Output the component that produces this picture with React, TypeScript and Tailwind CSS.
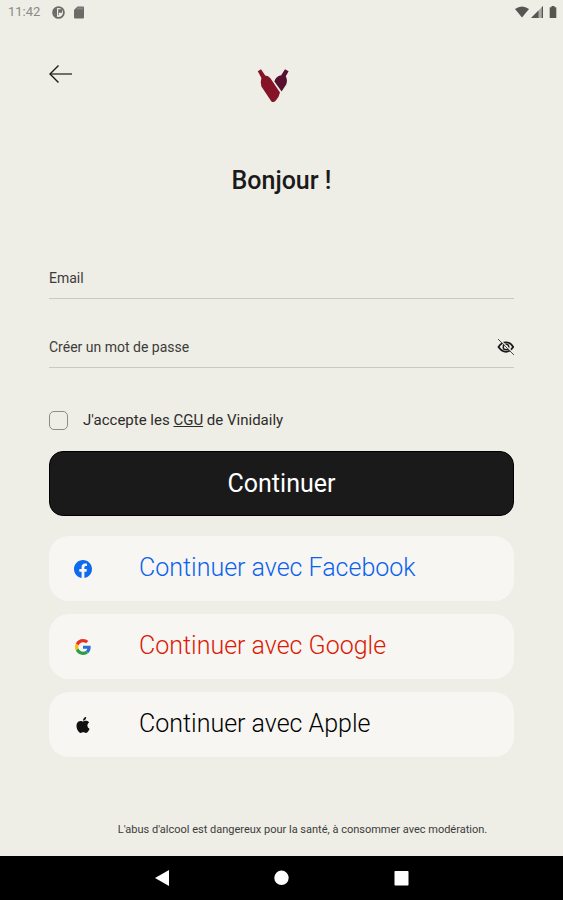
import { useState } from "react";
import type { ReactNode } from "react";

function StatusBar() {
  return (
    <div className="flex h-6 items-center justify-between pl-2 pr-1.5 text-[#6b6b67]">
      <div className="flex items-center">
        <span className="text-[13px] leading-6 text-[#8a8a86]">11:42</span>
        <svg className="ml-3 h-[13px] w-[13px]" viewBox="0 0 13 13">
          <circle cx="6.5" cy="6.5" r="5.4" fill="none" stroke="currentColor" strokeWidth="1.8" />
          <path d="M1.5 3.5L5 2v9L2.5 10z" fill="currentColor" />
          <path d="M6.2 3.2H10v3.6H6.9v2.4H6.2z" fill="currentColor" />
        </svg>
        <svg className="ml-2 h-[13px] w-3" viewBox="0 0 12 13" fill="currentColor">
          <path d="M4.5 0.5H10q1 0 1 1V11.5q0 1-1 1H2q-1 0-1-1V4z" />
          <path d="M5 1.5v2M7 1.5v2M9 1.5v2" stroke="#b8b8b3" strokeWidth="0.7" />
        </svg>
      </div>
      <div className="flex items-center text-[#555552]">
        <svg className="h-3 w-[14px]" viewBox="0 0 14 12" fill="currentColor">
          <path d="M0 3Q7-2 14 3L7 11.5z" />
        </svg>
        <svg className="ml-0.5 h-3 w-3" viewBox="0 0 12 12">
          <path d="M0 12L12 0v12z" fill="#a9a9a5" />
          <path d="M0 12L7.5 4.5V12zM10.8 1.2L12 0v12h-1.2z" fill="currentColor" />
        </svg>
        <svg className="ml-1.5 h-3 w-2" viewBox="0 0 8 12" fill="currentColor">
          <path d="M2.5 0h3v1.3h1.8V12H.7V1.3h1.8z" />
        </svg>
      </div>
    </div>
  );
}

function Logo() {
  return (
    <svg className="h-9 w-8" viewBox="0 0 32 36">
      <path
        d="M0.8 4.2L4 2.2L8.2 8.4Q11.5 8.6 13.4 11.2L23 25.4Q22 30.5 18.6 33.8Q16.5 36 14.4 34.4L4.4 19.4Q3 15 4.4 11z"
        fill="#851427"
      />
      <path
        d="M28 2.2L31.6 4.2L28.8 9.2Q31 13.5 29.2 17.4L24.6 24.4L17.4 14.4Q18.4 9.4 24.2 8.2z"
        fill="#561131"
      />
    </svg>
  );
}

function FacebookIcon() {
  return (
    <svg className="h-[18px] w-[18px]" viewBox="0 0 24 24">
      <path
        fill="#0f6bee"
        d="M24 12.07C24 5.4 18.63 0 12 0S0 5.4 0 12.07C0 18.1 4.39 23.1 10.13 24v-8.44H7.08v-3.49h3.05V9.41c0-3.02 1.79-4.69 4.53-4.69 1.31 0 2.68.24 2.68.24v2.97h-1.51c-1.49 0-1.96.93-1.96 1.89v2.25h3.33l-.53 3.49h-2.8V24C19.61 23.1 24 18.1 24 12.07z"
      />
    </svg>
  );
}

function GoogleIcon() {
  return (
    <svg className="h-4 w-4" viewBox="0 0 48 48">
      <path fill="#e8311f" d="M24 9.5c3.54 0 6.71 1.22 9.21 3.6l6.85-6.85C35.9 2.38 30.47 0 24 0 14.62 0 6.51 5.38 2.56 13.22l7.98 6.19C12.43 13.72 17.74 9.5 24 9.5z" />
      <path fill="#2a6fd6" d="M46.98 24.55c0-1.57-.15-3.09-.38-4.55H24v9.02h12.94c-.58 2.96-2.26 5.48-4.78 7.18l7.73 6c4.51-4.18 7.09-10.36 7.09-17.65z" />
      <path fill="#FBBC05" d="M10.53 28.59c-.48-1.45-.76-2.99-.76-4.59s.27-3.14.76-4.59l-7.98-6.19C.92 16.46 0 20.12 0 24c0 3.88.92 7.54 2.56 10.78l7.97-6.19z" />
      <path fill="#2a9d48" d="M24 48c6.48 0 11.93-2.13 15.89-5.81l-7.73-6c-2.15 1.45-4.92 2.3-8.16 2.3-6.26 0-11.57-4.22-13.47-9.91l-7.98 6.19C6.51 42.62 14.62 48 24 48z" />
    </svg>
  );
}

function AppleIcon() {
  return (
    <svg className="h-4 w-4" viewBox="0 0 24 24" fill="#111111">
      <path d="M12.15 6.9c-.95 0-2.42-1.08-3.96-1.04-2.04.03-3.91 1.18-4.96 3.01-2.12 3.68-.55 9.1 1.52 12.09 1.01 1.45 2.21 3.09 3.79 3.04 1.52-.07 2.09-.99 3.94-.99 1.83 0 2.35.99 3.96.95 1.64-.03 2.68-1.48 3.68-2.95 1.16-1.69 1.64-3.33 1.66-3.42-.04-.01-3.18-1.22-3.22-4.86-.03-3.04 2.48-4.49 2.6-4.56-1.43-2.09-3.62-2.32-4.39-2.38-2-.16-3.68 1.09-4.61 1.09zM15.53 3.83c.84-1.01 1.4-2.43 1.25-3.83-1.21.05-2.66.81-3.53 1.82-.78.9-1.45 2.34-1.27 3.71 1.34.1 2.72-.69 3.56-1.7" />
    </svg>
  );
}

interface SocialButtonProps {
  icon: ReactNode;
  label: string;
  color: string;
}

function SocialButton({ icon, label, color }: SocialButtonProps) {
  return (
    <button
      type="button"
      className="flex h-[65px] w-full items-center rounded-[20px] bg-[#f7f6f2] pl-6"
    >
      <span className="flex w-5 justify-center">{icon}</span>
      <span className={`ml-[46px] pb-0.5 text-[25px] font-light leading-8 ${color}`}>{label}</span>
    </button>
  );
}

function NavBar() {
  return (
    <nav className="flex h-11 items-center justify-center gap-[104px] bg-black text-white">
      <button type="button" aria-label="Retour">
        <svg className="h-4 w-4" viewBox="0 0 16 16" fill="currentColor">
          <path d="M1 8L15 0v16z" />
        </svg>
      </button>
      <button type="button" aria-label="Accueil">
        <svg className="h-4 w-4" viewBox="0 0 16 16" fill="currentColor">
          <circle cx="7.5" cy="7.8" r="7.2" />
        </svg>
      </button>
      <button type="button" aria-label="Applications">
        <svg className="h-4 w-4" viewBox="0 0 16 16" fill="currentColor">
          <rect x="0.5" y="1" width="14" height="14.5" rx="0.8" />
        </svg>
      </button>
    </nav>
  );
}

export default function App() {
  const [showPassword, setShowPassword] = useState(false);
  const [accepted, setAccepted] = useState(false);

  return (
    <div className="flex min-h-screen flex-col bg-[#eeede6] font-['Roboto',sans-serif] text-[#1a1a1a]">
      <StatusBar />

      <main className="flex flex-1 flex-col px-[49px]">
        <header className="mt-10 flex items-start">
          <button type="button" aria-label="Retour">
            <svg className="h-5 w-6" viewBox="0 0 24 20" fill="none" stroke="#1a1a1a">
              <path d="M1 10h22" strokeWidth="1.2" />
              <path d="M9.5 1.5L1 10l8.5 8.5" strokeWidth="1.4" />
            </svg>
          </button>
          <div className="flex flex-1 justify-center pt-[3px]">
            <Logo />
          </div>
          <div className="w-[42px]" />
        </header>

        <h1 className="mt-[62px] text-center text-[25px] font-medium leading-8">Bonjour !</h1>

        <form className="mt-[61px]" onSubmit={(e) => e.preventDefault()}>
          <div className="flex items-center border-b border-[#c9c8c4] text-[14px] text-[#3c3c3a]">
            <label htmlFor="email">Email</label>
            <input
              id="email"
              type="email"
              className="h-10 min-w-0 flex-1 bg-transparent pl-3 outline-none"
            />
          </div>

          <div className="mt-7 flex items-center border-b border-[#c9c8c4] text-[14px] text-[#3c3c3a]">
            <label htmlFor="password">Créer un mot de passe</label>
            <input
              id="password"
              type={showPassword ? "text" : "password"}
              className="h-10 min-w-0 flex-1 bg-transparent pl-3 outline-none"
            />
            <button
              type="button"
              aria-label="Afficher le mot de passe"
              onClick={() => setShowPassword(!showPassword)}
            >
              <svg className="h-[18px] w-[17px]" viewBox="0 0 17 18" fill="none" stroke="#1a1a1a">
                <path d="M1.5 9Q4.5 4.4 9 4.4T16.2 9Q13 13.8 9 13.8T1.5 9z" strokeWidth="1.8" />
                <circle cx="9" cy="9" r="2.8" strokeWidth="1.4" />
                <path d="M2 0.6L17 15.6" stroke="#eeede6" strokeWidth="1.2" />
                <path d="M1 1L17 17" stroke="#4a4a48" strokeWidth="1" />
              </svg>
            </button>
          </div>

          <div className="mt-10 flex h-6 items-center">
            <input
              id="terms"
              type="checkbox"
              checked={accepted}
              onChange={(e) => setAccepted(e.target.checked)}
              className="h-[19px] w-[19px] appearance-none rounded-[5px] border border-[#8c8c88] checked:bg-[#1a1a1a]"
            />
            <label htmlFor="terms" className="ml-[15px] text-[15px] leading-6 text-[#2c2c2a]">
              J'accepte les <a href="#cgu" className="underline">CGU</a> de Vinidaily
            </label>
          </div>

          <button
            type="submit"
            className="mt-[19px] block h-[65px] w-full rounded-[14px] border border-black bg-[#1a1a1a] text-[25px] leading-8 text-white"
          >
            Continuer
          </button>
        </form>

        <div className="mt-5 flex flex-col gap-[13px]">
          <SocialButton icon={<FacebookIcon />} label="Continuer avec Facebook" color="text-[#0a62ee]" />
          <SocialButton icon={<GoogleIcon />} label="Continuer avec Google" color="text-[#dc1a06]" />
          <SocialButton icon={<AppleIcon />} label="Continuer avec Apple" color="text-black" />
        </div>

        <p className="mt-auto pb-[18px] pl-[42px] text-center text-[11px] leading-4 text-[#3c3c3a]">
          L'abus d'alcool est dangereux pour la santé, à consommer avec modération.
        </p>
      </main>

      <NavBar />
    </div>
  );
}
